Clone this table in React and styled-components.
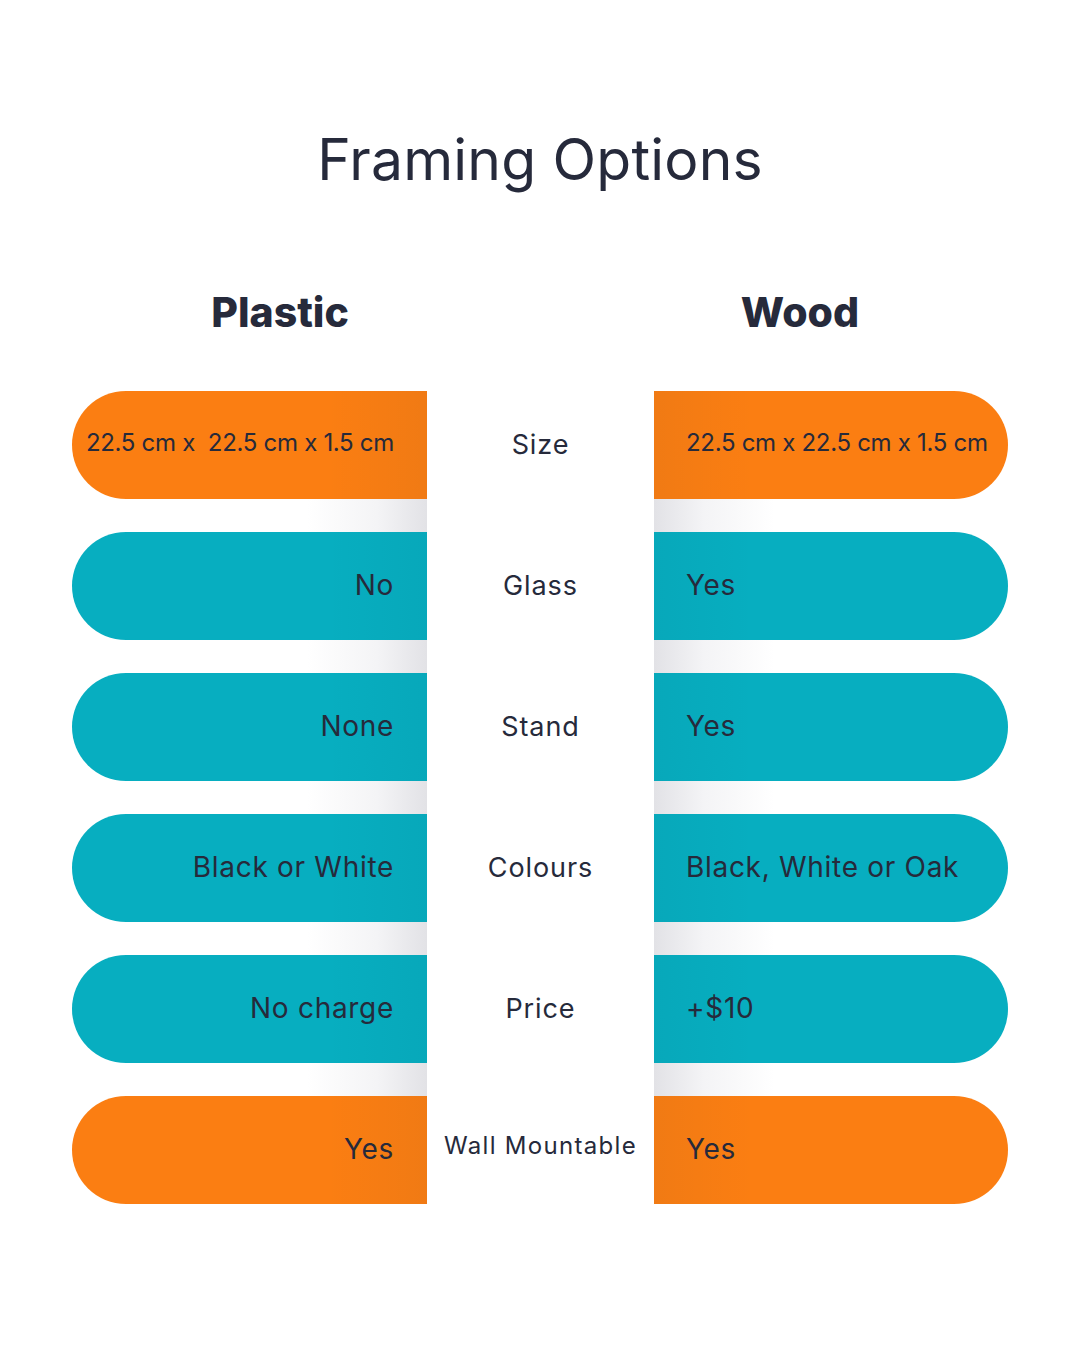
import React from 'react';
import styled, { createGlobalStyle } from 'styled-components';

const GlobalStyle = createGlobalStyle`
  html, body {
    margin: 0;
    padding: 0;
    background: #ffffff;
  }
  body {
    font-family: Inter, "Open Sans", sans-serif;
    color: #262a3b;
  }
`;

const Page = styled.div`
  width: 1080px;
  height: 1350px;
  box-sizing: border-box;
  padding-top: 130px;
  background: #ffffff;
`;

const Title = styled.h1`
  margin: 0;
  text-align: center;
  font-size: 57px;
  line-height: 60px;
  font-weight: 400;
  letter-spacing: 0.2px;
  color: #262a3b;
`;

const Headers = styled.div`
  display: grid;
  grid-template-columns: 416px 1fr 416px;
  padding: 0 72px;
  margin-top: 100px;
  height: 44px;
`;

const Heading = styled.h2`
  margin: 0;
  font-size: 41px;
  line-height: 44px;
  font-weight: 800;
  text-align: center;
  grid-column: ${(p) => (p.$side === 'left' ? 1 : 3)};
  color: #262a3b;
`;

const Table = styled.div`
  display: grid;
  grid-template-columns: 355px 227px 354px;
  margin: 57px 0 0 72px;
`;

const SideColumn = styled.div`
  display: flex;
  flex-direction: column;
  gap: 33px;
  background: ${(p) =>
    p.$side === 'left'
      ? 'linear-gradient(to left, #e2e2e6 0px, #f4f4f6 50px, #ffffff 120px)'
      : 'linear-gradient(to right, #e2e2e6 0px, #f4f4f6 50px, #ffffff 120px)'};
`;

const LabelColumn = styled.div`
  display: flex;
  flex-direction: column;
  gap: 33px;
`;

const Pill = styled.div`
  height: 108px;
  display: flex;
  align-items: center;
  box-sizing: border-box;
  background-color: ${(p) => (p.$accent ? '#fb7e12' : '#07aec0')};
  background-image: ${(p) =>
    p.$side === 'left'
      ? 'linear-gradient(to left, rgba(0,40,60,0.045) 0px, rgba(0,40,60,0) 100px)'
      : 'linear-gradient(to right, rgba(0,40,60,0.045) 0px, rgba(0,40,60,0) 100px)'};
  border-radius: ${(p) => (p.$side === 'left' ? '54px 0 0 54px' : '0 54px 54px 0')};
  justify-content: ${(p) => (p.$side === 'left' ? 'flex-end' : 'flex-start')};
  padding: ${(p) => (p.$side === 'left' ? '0 33px 2px 0' : '0 0 2px 32px')};
  padding-bottom: ${(p) => (p.$small ? '6px' : '2px')};
  font-size: ${(p) => (p.$small ? '24px' : '28px')};
  letter-spacing: ${(p) => (p.$small ? '-0.3px' : '0.7px')};
  color: #262a3b;
  white-space: pre;
`;

const Label = styled.div`
  height: 108px;
  display: flex;
  align-items: center;
  justify-content: center;
  padding-bottom: ${(p) => (p.$small ? '10px' : '2px')};
  box-sizing: border-box;
  font-size: ${(p) => (p.$small ? '24px' : '27px')};
  letter-spacing: ${(p) => (p.$small ? '1.3px' : '0.9px')};
  color: #262a3b;
  white-space: nowrap;
`;

const rows = [
  { label: 'Size', plastic: '22.5 cm x  22.5 cm x 1.5 cm', wood: '22.5 cm x 22.5 cm x 1.5 cm', accent: true, small: true },
  { label: 'Glass', plastic: 'No', wood: 'Yes' },
  { label: 'Stand', plastic: 'None', wood: 'Yes' },
  { label: 'Colours', plastic: 'Black or White', wood: 'Black, White or Oak' },
  { label: 'Price', plastic: 'No charge', wood: '+$10' },
  { label: 'Wall Mountable', plastic: 'Yes', wood: 'Yes', accent: true, smallLabel: true },
];

export default function App() {
  return (
    <Page>
      <GlobalStyle />
      <Title>Framing Options</Title>
      <Headers>
        <Heading $side="left">Plastic</Heading>
        <Heading $side="right">Wood</Heading>
      </Headers>
      <Table>
        <SideColumn $side="left">
          {rows.map((r) => (
            <Pill key={r.label} $side="left" $accent={r.accent} $small={r.small}>
              {r.plastic}
            </Pill>
          ))}
        </SideColumn>
        <LabelColumn>
          {rows.map((r) => (
            <Label key={r.label} $small={r.smallLabel}>
              {r.label}
            </Label>
          ))}
        </LabelColumn>
        <SideColumn $side="right">
          {rows.map((r) => (
            <Pill key={r.label} $side="right" $accent={r.accent} $small={r.small}>
              {r.wood}
            </Pill>
          ))}
        </SideColumn>
      </Table>
    </Page>
  );
}
